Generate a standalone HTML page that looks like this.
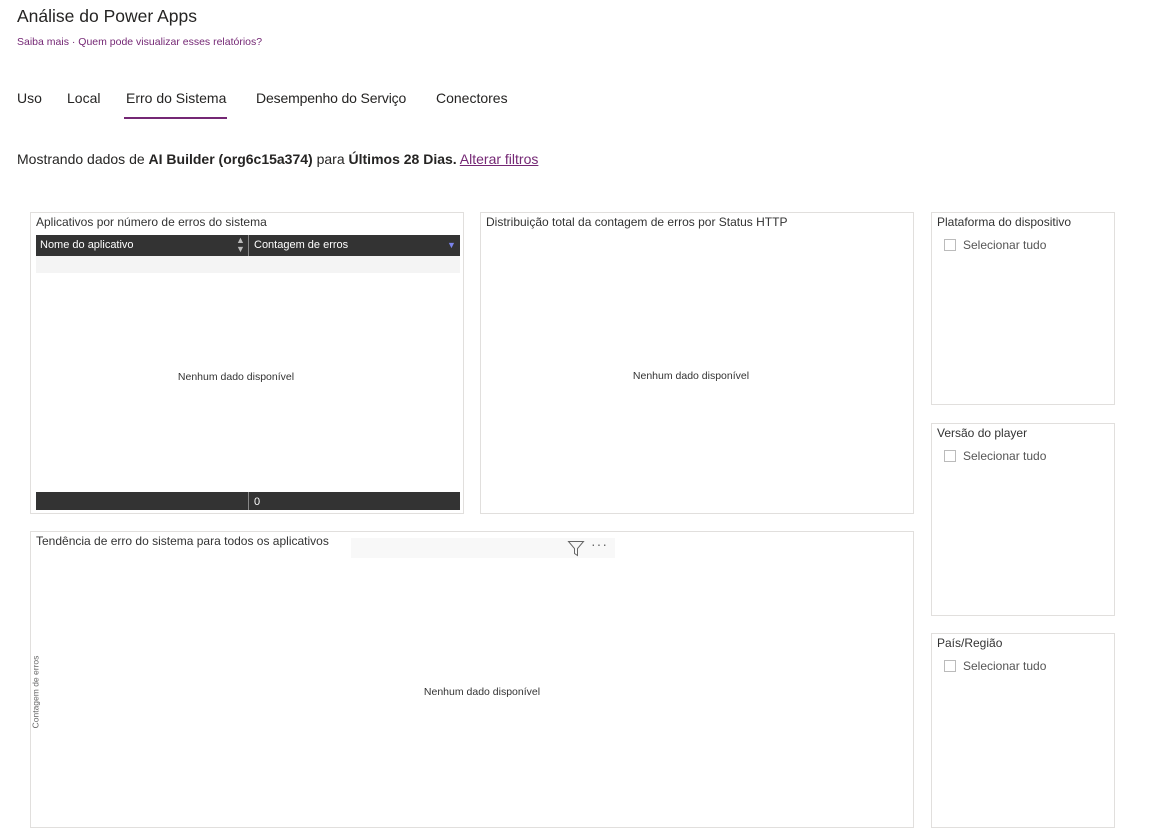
<!DOCTYPE html>
<html><head><meta charset="utf-8"><style>
*{margin:0;padding:0;box-sizing:border-box}
body{width:1165px;height:829px;background:#fff;font-family:"Segoe UI","Liberation Sans",sans-serif;color:#252423;position:relative;overflow:hidden}
.a{position:absolute;white-space:nowrap}
.box{position:absolute;border:1px solid #e1dfdd;background:#fff}
.t{position:absolute;left:5px;top:2px;font-size:12px;color:#333}
.nd{position:absolute;font-size:10.5px;color:#333;width:100%;text-align:center}
.cb{position:absolute;left:12px;top:25px;font-size:12px;color:#555;display:flex;align-items:center}
.cb i{display:inline-block;width:12px;height:12px;border:1px solid #bbb;margin-right:7px}
</style></head><body>
<div class="a" style="left:17px;top:6px;font-size:17.5px;color:#252423">Análise do Power Apps</div>
<div class="a" style="left:17px;top:36px;font-size:10.5px;color:#742774">Saiba mais · Quem pode visualizar esses relatórios?</div>
<div class="a" style="left:17px;top:90px;font-size:14px">Uso</div>
<div class="a" style="left:67px;top:90px;font-size:14px">Local</div>
<div class="a" style="left:126px;top:90px;font-size:14px">Erro do Sistema</div>
<div class="a" style="left:124px;top:117px;width:103px;height:2px;background:#742774"></div>
<div class="a" style="left:256px;top:90px;font-size:14px;letter-spacing:-0.15px">Desempenho do Serviço</div>
<div class="a" style="left:436px;top:90px;font-size:14px">Conectores</div>
<div class="a" style="left:17px;top:151px;font-size:14px">Mostrando dados de <b>AI Builder (org6c15a374)</b> para <b>Últimos 28 Dias.</b> <span style="color:#742774;text-decoration:underline">Alterar filtros</span></div>

<div class="box" style="left:30px;top:212px;width:434px;height:302px">
<div class="t">Aplicativos por número de erros do sistema</div>
<div class="a" style="left:5px;top:22px;width:424px;height:21px;background:#333;color:#fff;font-size:11px">
<span class="a" style="left:4px;top:4px">Nome do aplicativo</span>
<span class="a" style="left:200px;top:1px;font-size:9px;color:#bbb;line-height:9px">▲<br>▼</span>
<span class="a" style="left:212px;top:0;width:1px;height:21px;background:#888"></span>
<span class="a" style="left:218px;top:4px">Contagem de erros</span>
<span class="a" style="left:411px;top:5px;font-size:9px;color:#7b83eb">▼</span>
</div>
<div class="a" style="left:5px;top:43px;width:424px;height:17px;background:#f4f4f4"></div>
<div class="nd" style="top:158px;left:-11px">Nenhum dado disponível</div>
<div class="a" style="left:5px;top:279px;width:424px;height:18px;background:#333;color:#fff;font-size:11px">
<span class="a" style="left:212px;top:0;width:1px;height:18px;background:#888"></span>
<span class="a" style="left:218px;top:4px">0</span></div>
</div>

<div class="box" style="left:480px;top:212px;width:434px;height:302px">
<div class="t">Distribuição total da contagem de erros por Status HTTP</div>
<div class="nd" style="top:157px;left:-6px">Nenhum dado disponível</div>
</div>

<div class="box" style="left:30px;top:531px;width:884px;height:297px">
<div class="t">Tendência de erro do sistema para todos os aplicativos</div>
<div class="a" style="left:320px;top:6px;width:264px;height:20px;background:#f8f8f8"></div>
<svg class="a" style="left:536px;top:8px" width="18" height="17" viewBox="0 0 18 17"><path d="M1.5 1.5h15l-6 7v7l-3-2v-5z" fill="none" stroke="#666" stroke-width="1"/></svg>
<div class="a" style="left:560px;top:4px;font-size:14px;color:#666;letter-spacing:1px">···</div>
<div class="a" style="left:-32px;top:155px;font-size:8.5px;color:#666;transform:rotate(-90deg);transform-origin:center">Contagem de erros</div>
<div class="nd" style="top:154px;left:10px">Nenhum dado disponível</div>
</div>

<div class="box" style="left:931px;top:212px;width:184px;height:193px"><div class="t">Plataforma do dispositivo</div><div class="cb"><i></i>Selecionar tudo</div></div>
<div class="box" style="left:931px;top:423px;width:184px;height:193px"><div class="t">Versão do player</div><div class="cb"><i></i>Selecionar tudo</div></div>
<div class="box" style="left:931px;top:633px;width:184px;height:195px"><div class="t">País/Região</div><div class="cb"><i></i>Selecionar tudo</div></div>
</body></html>
